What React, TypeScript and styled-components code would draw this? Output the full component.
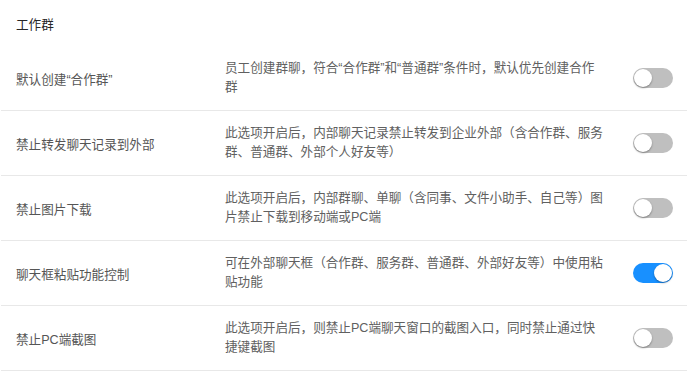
import React, { useState } from "react";
import styled, { createGlobalStyle } from "styled-components";

const GlobalStyle = createGlobalStyle`
  html, body {
    margin: 0;
    padding: 0;
    background: #ffffff;
  }
  body {
    font-family: "Liberation Sans", "Noto Sans CJK SC", sans-serif;
  }
`;

const Panel = styled.div`
  width: 686px;
  margin-left: 1px;
  background: #ffffff;
`;

const Header = styled.div`
  height: 46px;
  display: flex;
  align-items: center;
  padding-left: 15px;
  font-size: 12.6px;
  color: #262626;
`;

const Row = styled.div`
  height: 64px;
  display: grid;
  grid-template-columns: 209px 379px 1fr;
  align-items: center;
  padding: 0 14px 0 15px;
  border-bottom: 1px solid #e8e8e8;
`;

const Label = styled.div`
  font-size: 12.6px;
  color: #555555;
  white-space: nowrap;
`;

const Desc = styled.div`
  font-size: 12.6px;
  line-height: 19px;
  color: #606060;
  white-space: pre-line;
`;

const SwitchCell = styled.div`
  padding-left: 29px;
  display: flex;
  align-items: center;
`;

const Track = styled.button<{ $on: boolean }>`
  position: relative;
  flex: 0 0 40px;
  width: 40px;
  height: 20px;
  padding: 0;
  border: none;
  border-radius: 10px;
  cursor: pointer;
  background: ${(p) => (p.$on ? "#1890ff" : "#bfbfbf")};
  transition: background 0.2s;
`;

const Knob = styled.span<{ $on: boolean }>`
  position: absolute;
  top: 1px;
  left: ${(p) => (p.$on ? "21px" : "1px")};
  width: 18px;
  height: 18px;
  border-radius: 50%;
  background: #ffffff;
  box-shadow: 0 1px 2px rgba(0, 0, 0, 0.35);
  transition: left 0.2s;
`;

const Toggle: React.FC<{ initial: boolean }> = ({ initial }) => {
  const [on, setOn] = useState(initial);
  return (
    <Track $on={on} onClick={() => setOn(!on)} aria-pressed={on}>
      <Knob $on={on} />
    </Track>
  );
};

const items = [
  {
    label: "默认创建“合作群”",
    desc: "员工创建群聊，符合“合作群”和“普通群”条件时，默认优先创建合作\n群",
    on: false,
  },
  {
    label: "禁止转发聊天记录到外部",
    desc: "此选项开启后，内部聊天记录禁止转发到企业外部（含合作群、服务\n群、普通群、外部个人好友等）",
    on: false,
  },
  {
    label: "禁止图片下载",
    desc: "此选项开启后，内部群聊、单聊（含同事、文件小助手、自己等）图\n片禁止下载到移动端或PC端",
    on: false,
  },
  {
    label: "聊天框粘贴功能控制",
    desc: "可在外部聊天框（合作群、服务群、普通群、外部好友等）中使用粘\n贴功能",
    on: true,
  },
  {
    label: "禁止PC端截图",
    desc: "此选项开启后，则禁止PC端聊天窗口的截图入口，同时禁止通过快\n捷键截图",
    on: false,
  },
];

export default function App() {
  return (
    <>
      <GlobalStyle />
      <Panel>
        <Header>工作群</Header>
        {items.map((it) => (
          <Row key={it.label}>
            <Label>{it.label}</Label>
            <Desc>{it.desc}</Desc>
            <SwitchCell>
              <Toggle initial={it.on} />
            </SwitchCell>
          </Row>
        ))}
      </Panel>
    </>
  );
}
